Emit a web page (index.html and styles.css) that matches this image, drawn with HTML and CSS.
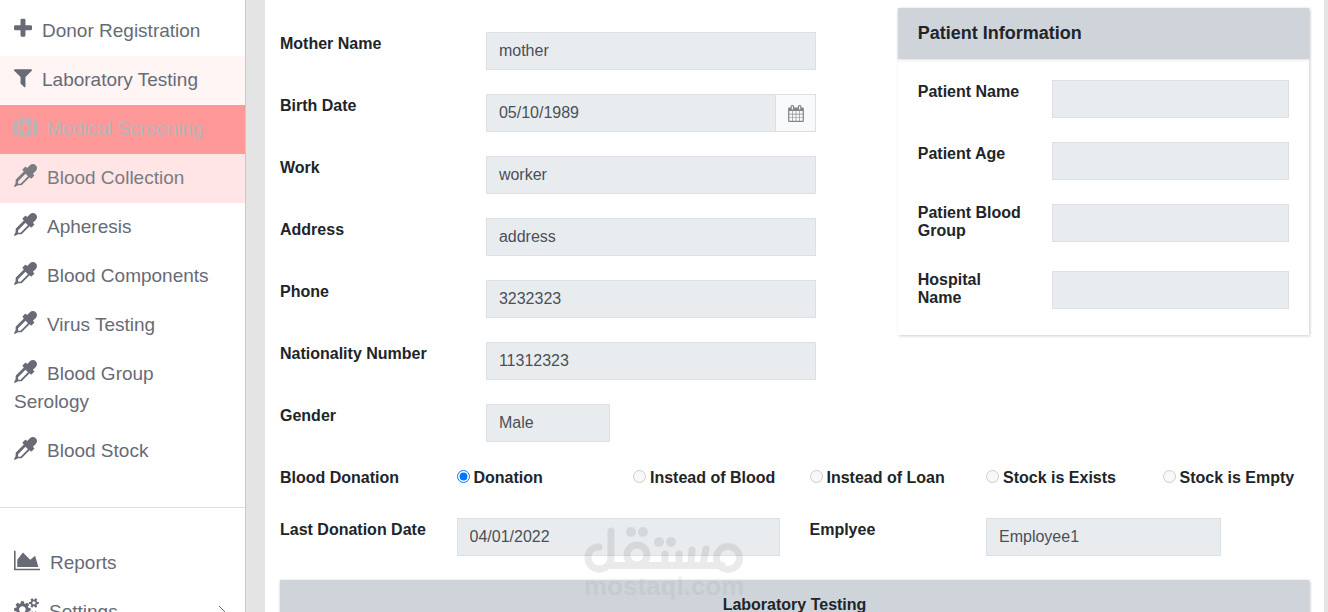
FILE: index.html
```
<!DOCTYPE html>
<html lang="en">
<head>
    <meta charset="UTF-8">
    <title>Blood Bank - Medical Screening</title>
    <meta name="viewport" content="width=device-width, initial-scale=1">
    <link rel="stylesheet" href="styles.css">
</head>
<body>

<svg class="icon-defs" aria-hidden="true">
    <symbol id="i-eyedropper" viewBox="0 0 1792 1792"><path d="M1698 94q94 94 94 226.5t-94 225.5l-225 223 104 104q10 10 10 23t-10 23l-210 210q-10 10-23 10t-23-10l-105-105-603 603q-37 37-90 37h-203l-256 128-64-64 128-256v-203q0-53 37-90l603-603-105-105q-10-10-10-23t10-23l210-210q10-10 23-10t23 10l104 104 223-225q93-94 225.5-94t226.5 94zm-1186 1442l576-576-192-192-576 576v192h192z"/></symbol>
</svg>

<div class="page">
    <nav class="sidebar">
        <ul class="menu">
            <li><a href="#"><svg class="icon icon-narrow" viewBox="192 0 1408 1792"><path d="M1600 736v192q0 40-28 68t-68 28h-416v416q0 40-28 68t-68 28h-192q-40 0-68-28t-28-68v-416h-416q-40 0-68-28t-28-68v-192q0-40 28-68t68-28h416v-416q0-40 28-68t68-28h192q40 0 68 28t28 68v416h416q40 0 68 28t28 68z"/></svg>Donor Registration</a></li>
            <li><a href="#" class="visited"><svg class="icon icon-narrow" viewBox="192 0 1408 1792"><path d="M1595 295q17 41-14 70l-493 493v742q0 42-39 59-13 5-25 5-27 0-45-19l-256-256q-19-19-19-45v-486l-493-493q-31-29-14-70 17-39 59-39h1280q42 0 59 39z"/></svg>Laboratory Testing</a></li>
            <li><a href="#" class="active"><svg class="icon" viewBox="0 0 1792 1792"><path d="M1280 1088v-192q0-14-9-23t-23-9h-224v-224q0-14-9-23t-23-9h-192q-14 0-23 9t-9 23v224h-224q-14 0-23 9t-9 23v192q0 14 9 23t23 9h224v224q0 14 9 23t23 9h192q14 0 23-9t9-23v-224h224q14 0 23-9t9-23zm-640-704h512v-128h-512v128zm-384 0v1280h-32q-92 0-158-66t-66-158v-832q0-92 66-158t158-66h32zm1152 0v1280h-1024v-1280h128v-160q0-40 28-68t68-28h576q40 0 68 28t28 68v160h128zm384 224v832q0 92-66 158t-158 66h-32v-1280h32q92 0 158 66t66 158z"/></svg>Medical Screening</a></li>
            <li><a href="#" class="hover"><svg class="icon"><use href="#i-eyedropper"/></svg>Blood Collection</a></li>
            <li><a href="#"><svg class="icon"><use href="#i-eyedropper"/></svg>Apheresis</a></li>
            <li><a href="#"><svg class="icon"><use href="#i-eyedropper"/></svg>Blood Components</a></li>
            <li><a href="#"><svg class="icon"><use href="#i-eyedropper"/></svg>Virus Testing</a></li>
            <li><a href="#"><svg class="icon"><use href="#i-eyedropper"/></svg>Blood Group Serology</a></li>
            <li><a href="#"><svg class="icon"><use href="#i-eyedropper"/></svg>Blood Stock</a></li>
        </ul>
        <hr class="divider">
        <ul class="menu">
            <li><a href="#"><svg class="icon icon-chart" viewBox="0 0 2048 1792"><path d="M2048 1536v128h-2048v-1536h128v1408h1920zm-384-1024l256 896h-1664v-576l448-576 576 576z"/></svg>Reports</a></li>
            <li><a href="#" class="has-sub"><span><svg class="icon icon-cogs" viewBox="0 0 1920 1792"><path d="M896 896q0-106-75-181t-181-75-181 75-75 181 75 181 181 75 181-75 75-181zm768 512q0-52-38-90t-90-38-90 38-38 90q0 53 37.5 90.5t90.5 37.5 90.5-37.5 37.5-90.5zm0-1024q0-52-38-90t-90-38-90 38-38 90q0 53 37.5 90.5t90.5 37.5 90.5-37.5 37.5-90.5zm-384 421v185q0 10-7 19.5t-16 10.5l-155 24q-11 35-32 76 34 48 90 115 7 11 7 20 0 12-7 19-23 30-82.5 89.5t-78.5 59.5q-11 0-21-7l-115-90q-37 19-77 31-11 108-23 155-7 24-30 24h-186q-11 0-20-7.5t-10-17.5l-23-153q-34-10-75-31l-118 89q-7 7-20 7-11 0-21-8-144-133-144-160 0-9 7-19 10-14 41-53t47-61q-23-44-35-82l-152-24q-10-1-17-9.5t-7-19.5v-185q0-10 7-19.5t16-10.5l155-24q11-35 32-76-34-48-90-115-7-11-7-20 0-12 7-20 22-30 82-89t79-59q11 0 21 7l115 90q34-18 77-32 11-108 23-154 7-24 30-24h186q11 0 20 7.5t10 17.5l23 153q34 10 75 31l118-89q8-7 20-7 11 0 21 8 144 133 144 160 0 8-7 19-12 16-42 54t-45 60q23 48 34 82l152 23q10 2 17 10.5t7 19.5zm640 533v140q0 16-149 31-12 27-30 52 51 113 51 138 0 4-4 7-122 71-124 71-8 0-46-47t-52-68q-20 2-30 2t-30-2q-14 21-52 68t-46 47q-2 0-124-71-4-3-4-7 0-25 51-138-18-25-30-52-149-15-149-31v-140q0-16 149-31 13-29 30-52-51-113-51-138 0-4 4-7 4-2 35-20t59-34 30-16q8 0 46 46.5t52 67.5q20-2 30-2t30 2q51-71 92-112l6-2q4 0 124 70 4 3 4 7 0 25-51 138 17 23 30 52 149 15 149 31zm0-1024v140q0 16-149 31-12 27-30 52 51 113 51 138 0 4-4 7-122 71-124 71-8 0-46-47t-52-68q-20 2-30 2t-30-2q-14 21-52 68t-46 47q-2 0-124-71-4-3-4-7 0-25 51-138-18-25-30-52-149-15-149-31v-140q0-16 149-31 13-29 30-52-51-113-51-138 0-4 4-7 4-2 35-20t59-34 30-16q8 0 46 46.5t52 67.5q20-2 30-2t30 2q51-71 92-112l6-2q4 0 124 70 4 3 4 7 0 25-51 138 17 23 30 52 149 15 149 31z"/></svg>Settings</span><svg class="chevron" viewBox="0 0 8 14"><path d="M1 1l6 6-6 6"/></svg></a></li>
        </ul>
    </nav>

    <main class="content">
        <form class="form">
            <div class="row">
                <div class="span-7 donor">
                    <div class="row">
                        <label class="col span-4" for="mother">Mother Name</label>
                        <div class="col span-7"><input type="text" id="mother" value="mother" readonly></div>
                    </div>
                    <div class="row">
                        <label class="col span-4" for="birth">Birth Date</label>
                        <div class="col span-7 input-group">
                            <input type="text" id="birth" value="05/10/1989" readonly>
                            <button type="button" class="btn-date" aria-label="Choose date"><svg viewBox="64 0 1664 1792"><path d="M192 1664h288v-288h-288v288zm352 0h320v-288h-320v288zm-352-352h288v-320h-288v320zm352 0h320v-320h-320v320zm-352-384h288v-288h-288v288zm736 736h320v-288h-320v288zm-384-736h320v-288h-320v288zm768 736h288v-288h-288v288zm-384-352h320v-320h-320v320zm-352-864v-288q0-13-9.5-22.5t-22.5-9.5h-64q-13 0-22.5 9.5t-9.5 22.5v288q0 13 9.5 22.5t22.5 9.5h64q13 0 22.5-9.5t9.5-22.5zm736 864h288v-320h-288v320zm-384-384h320v-288h-320v288zm384 0h288v-288h-288v288zm32-480v-288q0-13-9.5-22.5t-22.5-9.5h-64q-13 0-22.5 9.5t-9.5 22.5v288q0 13 9.5 22.5t22.5 9.5h64q13 0 22.5-9.5t9.5-22.5zm384-64v1280q0 52-38 90t-90 38h-1408q-52 0-90-38t-38-90v-1280q0-52 38-90t90-38h128v-96q0-66 47-113t113-47h64q66 0 113 47t47 113v96h384v-96q0-66 47-113t113-47h64q66 0 113 47t47 113v96h128q52 0 90 38t38 90z"/></svg></button>
                        </div>
                    </div>
                    <div class="row">
                        <label class="col span-4" for="work">Work</label>
                        <div class="col span-7"><input type="text" id="work" value="worker" readonly></div>
                    </div>
                    <div class="row">
                        <label class="col span-4" for="address">Address</label>
                        <div class="col span-7"><input type="text" id="address" value="address" readonly></div>
                    </div>
                    <div class="row">
                        <label class="col span-4" for="phone">Phone</label>
                        <div class="col span-7"><input type="text" id="phone" value="3232323" readonly></div>
                    </div>
                    <div class="row">
                        <label class="col span-4" for="nationality">Nationality Number</label>
                        <div class="col span-7"><input type="text" id="nationality" value="11312323" readonly></div>
                    </div>
                    <div class="row">
                        <label class="col span-4" for="gender">Gender</label>
                        <div class="col span-3"><input type="text" id="gender" value="Male" readonly></div>
                    </div>
                </div>

                <div class="col span-5">
                    <section class="card">
                        <h2 class="card-header">Patient Information</h2>
                        <div class="card-body">
                            <div class="row">
                                <label class="col span-4" for="pname">Patient Name</label>
                                <div class="col span-8"><input type="text" id="pname" readonly></div>
                            </div>
                            <div class="row">
                                <label class="col span-4" for="page">Patient Age</label>
                                <div class="col span-8"><input type="text" id="page" readonly></div>
                            </div>
                            <div class="row">
                                <label class="col span-4 two-lines" for="pgroup">Patient Blood Group</label>
                                <div class="col span-8"><input type="text" id="pgroup" readonly></div>
                            </div>
                            <div class="row">
                                <label class="col span-4 two-lines" for="hospital">Hospital Name</label>
                                <div class="col span-8"><input type="text" id="hospital" readonly></div>
                            </div>
                        </div>
                    </section>
                </div>
            </div>

            <div class="row donation" role="radiogroup" aria-labelledby="donation-label">
                <div class="col span-2 caption" id="donation-label">Blood Donation</div>
                <label class="col span-2 radio"><input type="radio" name="donation" checked>Donation</label>
                <label class="col span-2 radio"><input type="radio" name="donation" disabled>Instead of Blood</label>
                <label class="col span-2 radio"><input type="radio" name="donation" disabled>Instead of Loan</label>
                <label class="col span-2 radio"><input type="radio" name="donation" disabled>Stock is Exists</label>
                <label class="col span-2 radio"><input type="radio" name="donation" disabled>Stock is Empty</label>
            </div>

            <div class="row">
                <label class="col span-2" for="last">Last Donation Date</label>
                <div class="col span-4"><input type="text" id="last" value="04/01/2022" readonly></div>
                <label class="col span-2" for="employee">Emplyee</label>
                <div class="col span-3"><input type="text" id="employee" value="Employee1" readonly></div>
            </div>

            <div class="col">
                <section class="card">
                    <h3 class="card-header card-title">Laboratory Testing</h3>
                </section>
            </div>
        </form>
    </main>
</div>

<div class="watermark" aria-hidden="true">
    <svg viewBox="0 0 160 48">
        <g fill="none" stroke="#000" stroke-width="7" stroke-linecap="round" stroke-linejoin="round">
            <path d="M15 20C8 20 4 25 4 30.5C4 37 9 42 15.5 42C22 42 27 37 27 30V4M24 38.5H138"/>
            <circle cx="53" cy="28" r="10"/>
            <path d="M81 27V38M95 27V38M108 23L107 38M122 22L119 38"/>
            <circle cx="144" cy="31" r="11.5"/>
        </g>
        <circle cx="47" cy="5" r="5"/><circle cx="59" cy="5" r="5"/>
        <circle cx="75" cy="15" r="5"/><circle cx="87" cy="15" r="5"/>
    </svg>
    <span>mostaql.com</span>
</div>

</body>
</html>
```
FILE: styles.css
```
*
{
    box-sizing: border-box;
}

body
{
    margin: 0;
    height: 100vh;
    overflow: hidden;
    background: #e4e4e4;
    color: #212529;
    font-family: "Liberation Sans", Arial, sans-serif;
    font-size: 16px;
}

.icon-defs
{
    display: none;
}

.page
{
    display: flex;
    min-height: 100vh;
}

/* Sidebar */
.sidebar
{
    flex: 0 0 246px;
    padding-top: 7px;
    background: #fff;
    border-right: 1px solid #c9c9c9;
}
.menu
{
    list-style: none;
    margin: 0;
    padding: 0;
}
.menu a
{
    display: block;
    padding: 10px 14px 11px;
    color: #686a76;
    font-size: 19px;
    line-height: 28px;
    text-decoration: none;
}
.menu a.visited
{
    background: #fff5f5;
}
.menu a.active
{
    background: #ff9999;
    color: #b5b5b8;
}
.menu a.hover
{
    background: #ffe5e6;
    color: #7b7b82;
}
.menu a.has-sub
{
    display: flex;
    align-items: center;
    justify-content: space-between;
}
.icon
{
    width: 23px;
    height: 23px;
    margin: -4px 10px -4px 0;
    vertical-align: 1px;
    fill: currentColor;
}
.icon-narrow
{
    width: 18px;
}
.icon-chart
{
    width: 26px;
}
.icon-cogs
{
    width: 25px;
}
.chevron
{
    width: 8px;
    height: 14px;
    margin-right: 5px;
    fill: none;
    stroke: currentColor;
    stroke-width: 1;
}
.divider
{
    height: 1px;
    margin: 31px 0;
    border: 0;
    background: #dedfe0;
}

/* Form */
.content
{
    flex: 1;
    min-width: 0;
    margin: 0 4px 0 19px;
    padding-top: 8px;
    background: #fff;
}
.form
{
    display: grid;
    gap: 24px;
}
.row
{
    display: grid;
    grid-template-columns: repeat(12, minmax(0, 1fr));
    align-items: start;
}
.col
{
    padding: 0 15px;
}
.span-2 { grid-column: span 2; }
.span-3 { grid-column: span 3; }
.span-4 { grid-column: span 4; }
.span-5 { grid-column: span 5; }
.span-7 { grid-column: span 7; }
.span-8 { grid-column: span 8; }

.donor
{
    display: grid;
    gap: 24px;
    padding-top: 24px;
}
label, .caption
{
    font-weight: bold;
    line-height: 24px;
}
.two-lines
{
    padding-bottom: 7px;
    line-height: 18px;
}
input[type="text"]
{
    display: block;
    width: 100%;
    height: 38px;
    padding: 0 12px;
    border: 1px solid #dcdfe3;
    border-radius: 0;
    background: #e9ecef;
    color: #495057;
    font: inherit;
    outline: none;
}
.input-group
{
    display: flex;
}
.input-group input
{
    flex: 1;
    min-width: 0;
}
.btn-date
{
    display: flex;
    align-items: center;
    justify-content: center;
    width: 40px;
    height: 38px;
    padding: 0;
    border: 1px solid #dcdfe3;
    border-left: 0;
    background: #f8f9fa;
}
.btn-date svg
{
    width: 16px;
    height: 17px;
    fill: #80868b;
}
.donation
{
    min-height: 28px;
}
.radio
{
    display: flex;
    align-items: center;
    white-space: nowrap;
}
.radio input
{
    width: 13px;
    height: 13px;
    margin: 0 4px 3px 0;
}

/* Cards */
.card
{
    background: #fff;
    box-shadow: 1px 1px 3px rgba(0, 0, 0, 0.2);
}
.card-header
{
    margin: 0;
    padding: 12px 20px;
    background: #ced4da;
    box-shadow: 0 1px 3px rgba(0, 0, 0, 0.12);
    font-size: 18px;
    line-height: 27px;
}
.card-title
{
    font-size: 16px;
    line-height: 26px;
    text-align: center;
}
.card-body
{
    display: grid;
    gap: 24px;
    padding: 21px 5px;
}

/* Watermark over the page */
.watermark
{
    position: absolute;
    left: 50%;
    bottom: 15px;
    width: 160px;
    margin-left: -80px;
    opacity: 0.08;
    pointer-events: none;
    text-align: center;
}
.watermark svg
{
    display: block;
    width: 160px;
    height: 48px;
}
.watermark span
{
    display: block;
    opacity: 0.6;
    font-size: 26px;
    font-weight: bold;
    line-height: 22px;
}
```
